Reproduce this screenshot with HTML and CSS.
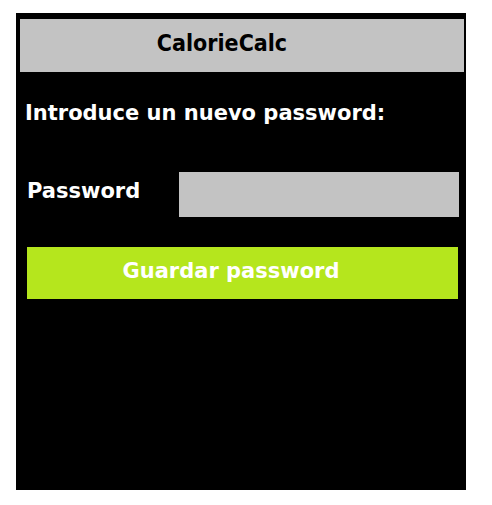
FILE: index.html
```html
<!DOCTYPE html>
<html lang="es">
<head>
<meta charset="utf-8">
<title>CalorieCalc</title>
<link rel="stylesheet" href="styles.css">
</head>
<body>
<div class="panel">
  <div class="header">CalorieCalc</div>
  <div class="intro">Introduce un nuevo password:</div>
  <div class="row">
    <label class="label" for="pw">Password</label>
    <input class="field" id="pw" type="password">
  </div>
  <div class="button">Guardar password</div>
</div>
</body>
</html>
```
FILE: styles.css
```css
html, body {
  margin: 0;
  padding: 0;
  background: #ffffff;
}

.panel {
  margin: 13px 0 0 16px;
  width: 450px;
  height: 477px;
  box-sizing: border-box;
  padding: 6px 2px 0 4px;
  background: #000000;
  display: flex;
  flex-direction: column;
  font-family: "DejaVu Sans", Verdana, sans-serif;
  font-weight: bold;
}

.header {
  height: 53px;
  box-sizing: border-box;
  padding: 10px 40px 0 0;
  background: #c3c3c3;
  color: #000000;
  text-align: center;
  font-family: "DejaVu Sans Condensed", "DejaVu Sans", sans-serif;
  font-stretch: condensed;
  font-size: 23px;
  line-height: 28px;
}

.intro {
  margin: 29px 0 0 5px;
  color: #ffffff;
  font-size: 21px;
  line-height: 24px;
}

.row {
  margin-top: 47px;
  display: flex;
  align-items: flex-start;
}

.label {
  margin: 7px 0 0 7px;
  color: #ffffff;
  font-size: 21px;
  line-height: 24px;
}

.field {
  margin: 0 5px 0 auto;
  width: 280px;
  height: 45px;
  box-sizing: border-box;
  border: none;
  padding: 0;
  background: #c3c3c3;
  outline: none;
}

.button {
  margin: 30px 0 0 7px;
  width: 431px;
  height: 52px;
  box-sizing: border-box;
  padding: 12px 23px 0 0;
  background: #b5e61d;
  color: #ffffff;
  text-align: center;
  font-size: 21px;
  line-height: 24px;
}
```
